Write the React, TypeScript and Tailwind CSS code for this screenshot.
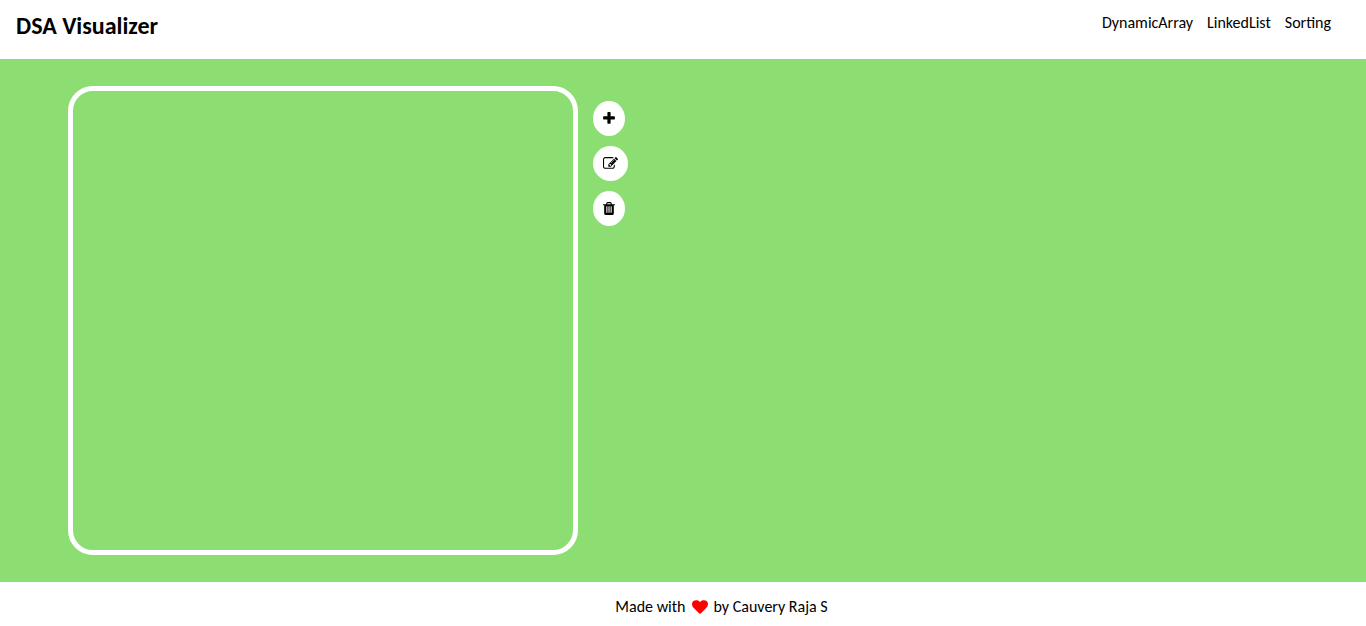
import type { ReactNode } from "react";

const icons = {
  plus: "M1600 736v192q0 40-28 68t-68 28h-416v416q0 40-28 68t-68 28h-192q-40 0-68-28t-28-68v-416h-416q-40 0-68-28t-28-68v-192q0-40 28-68t68-28h416v-416q0-40 28-68t68-28h192q40 0 68 28t28 68v416h416q40 0 68 28t28 68z",
  edit: "M888 1184l116-116-152-152-116 116v56h96v96h56zm440-720q-16-16-33 1l-350 350q-17 17-1 33t33-1l350-350q17-17 1-33zm80 594v190q0 119-84.5 203.5t-203.5 84.5h-832q-119 0-203.5-84.5t-84.5-203.5v-832q0-119 84.5-203.5t203.5-84.5h832q63 0 117 25 15 7 18 23 3 17-9 29l-49 49q-14 14-32 8-23-6-45-6h-832q-66 0-113 47t-47 113v832q0 66 47 113t113 47h832q66 0 113-47t47-113v-126q0-13 9-22l64-64q15-15 35-7t20 29zm-96-738l288 288-672 672h-288v-288zm444 132l-92 92-288-288 92-92q28-28 68-28t68 28l152 152q28 28 28 68t-28 68z",
  trash: "M704 1376v-704q0-14-9-23t-23-9h-64q-14 0-23 9t-9 23v704q0 14 9 23t23 9h64q14 0 23-9t9-23zm256 0v-704q0-14-9-23t-23-9h-64q-14 0-23 9t-9 23v704q0 14 9 23t23 9h64q14 0 23-9t9-23zm256 0v-704q0-14-9-23t-23-9h-64q-14 0-23 9t-9 23v704q0 14 9 23t23 9h64q14 0 23-9t9-23zm-544-992h448l-48-117q-7-9-17-11h-317q-10 2-17 11zm928 32v64q0 14-9 23t-23 9h-96v948q0 83-47 143.5t-113 60.5h-832q-66 0-113-58.5t-47-141.5v-952h-96q-14 0-23-9t-9-23v-64q0-14 9-23t23-9h309l70-167q15-37 54-63t79-26h320q40 0 79 26t54 63l70 167h309q14 0 23 9t9 23z",
  heart: "M896 1664q-26 0-44-18l-624-602q-10-8-27.5-26t-55.5-65.5-68-97.5-53.5-121-23.5-138q0-220 127-344t351-124q62 0 126.5 21.5t120 58 95.5 68.5 76 68q36-36 76-68t95.5-68.5 120-58 126.5-21.5q224 0 351 124t127 344q0 221-229 450l-623 600q-18 18-44 18z",
};

function Icon({ path, viewBox = "0 0 1792 1792", className }: { path: string; viewBox?: string; className: string }) {
  return (
    <svg aria-hidden="true" viewBox={viewBox} fill="currentColor" className={className}>
      <path d={path} />
    </svg>
  );
}

function RoundButton({ label, children }: { label: string; children: ReactNode }) {
  return (
    <button type="button" aria-label={label} className="flex h-[35px] cursor-pointer items-center rounded-[50%] bg-white px-[10px]">
      {children}
    </button>
  );
}

export default function App() {
  return (
    <div className="flex min-h-screen flex-col bg-white font-[Carlito,Calibri,Lato,sans-serif] text-black">
      <header className="flex h-[59px] items-start justify-between px-4">
        <h1 className="pt-2 text-[24px] leading-9 font-bold">DSA Visualizer</h1>
        <nav className="flex gap-[14px] pt-[11px] pr-[19px] text-base">
          <a href="#dynamic-array">DynamicArray</a>
          <a href="#linked-list">LinkedList</a>
          <a href="#sorting">Sorting</a>
        </nav>
      </header>
      <main className="flex flex-1 bg-[#8dde72] px-[5%] py-[27px]">
        <section aria-label="Canvas" className="w-[510px] rounded-[25px] border-5 border-white" />
        <div className="flex flex-col items-start gap-[10px] p-[15px]">
          <RoundButton label="Add">
            <Icon path={icons.plus} viewBox="192 0 1408 1792" className="h-[15px] w-3" />
          </RoundButton>
          <RoundButton label="Edit">
            <Icon path={icons.edit} className="size-[15px]" />
          </RoundButton>
          <RoundButton label="Delete">
            <Icon path={icons.trash} viewBox="192 0 1408 1792" className="h-[15px] w-3" />
          </RoundButton>
        </div>
      </main>
      <footer className="flex h-11 items-center justify-center gap-[6px] pt-[6px] pl-[77px]">
        <span>Made with</span>
        <Icon path={icons.heart} className="size-4 text-[#ff0000]" />
        <span>by Cauvery Raja S</span>
      </footer>
    </div>
  );
}
